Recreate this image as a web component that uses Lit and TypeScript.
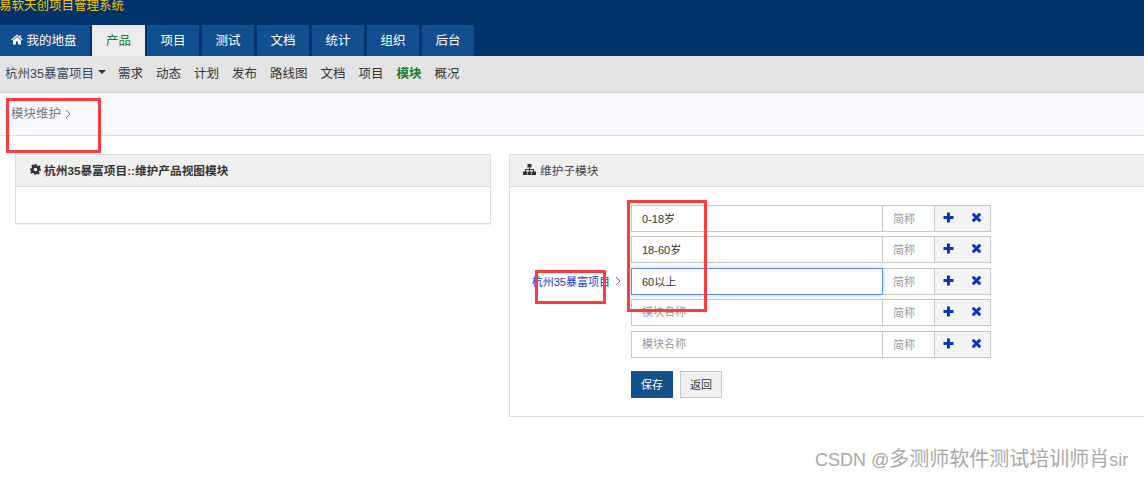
import { LitElement, html, css, svg } from "lit";
import { customElement } from "lit/decorators.js";

const FONT = css`"Liberation Sans", "Noto Sans CJK SC", sans-serif`;

const plusIcon = svg`<svg class="ico" width="11" height="11" viewBox="0 0 11 11"><path d="M4 0.5h3v3.5h3.5v3H7v3.5H4V7H0.5V4H4z" fill="#0a34c4"/></svg>`;
const timesIcon = svg`<svg class="ico" width="9" height="9" viewBox="0 0 9 9"><path d="M1.7 1.7L7.3 7.3M7.3 1.7L1.7 7.3" stroke="#0a34c4" stroke-width="3" stroke-linecap="square" fill="none"/></svg>`;
const chevron = svg`<svg width="6" height="10" viewBox="0 0 6 10"><path d="M1 1l4 4-4 4" stroke="#777" stroke-width="1" fill="none"/></svg>`;
const homeIcon = svg`<svg width="12" height="11" viewBox="0 0 12 11"><path d="M6 0.6L0.3 5.6l.7.8L6 2l5 4.4.7-.8-2-1.8V1.2H8.4v1.5zM2 6.6V10.6h3V7.6h2v3h3V6.6L6 3.1z" fill="#fff"/></svg>`;
const cogIcon = svg`<svg width="11" height="11" viewBox="0 0 11 11"><path fill-rule="evenodd" d="M4.5 0h2l.3 1.6 1.1.5L9.3 1.2l1.4 1.4-.9 1.4.5 1.1L11 4.5v2l-1.6.3-.5 1.1.9 1.4-1.4 1.4-1.4-.9-1.1.5L5.5 11h-1l-.3-1.6-1.1-.5-1.4.9L.3 8.4l.9-1.4-.5-1.1L0 6.5v-2l1.6-.3.5-1.1-.9-1.4L2.6.3 4 1.2l.5-.2zM5.5 3.7a1.8 1.8 0 100 3.6 1.8 1.8 0 000-3.6z" fill="#333"/></svg>`;
const sitemapIcon = svg`<svg width="13" height="11" viewBox="0 0 13 11"><g fill="#333"><rect x="4.5" y="0" width="4" height="3.5"/><rect x="6" y="3.5" width="1" height="4"/><rect x="2" y="5" width="9" height="1"/><rect x="2" y="5" width="1" height="3"/><rect x="10" y="5" width="1" height="3"/><rect x="0" y="7.5" width="4" height="3.5"/><rect x="4.5" y="7.5" width="4" height="3.5"/><rect x="9" y="7.5" width="4" height="3.5"/></g></svg>`;

@customElement("app-root")
export class AppRoot extends LitElement {
  static styles = css`
    :host {
      display: block;
      position: relative;
      width: 1144px;
      height: 478px;
      overflow: hidden;
      background: #fff;
      font-family: ${FONT};
      font-size: 12.5px;
      color: #333;
    }
    .header { background: #00336a; height: 56px; display: flex; flex-direction: column; }
    .title { height: 25px; color: #f5c400; font-size: 12.5px; line-height: 13px; white-space: nowrap; box-sizing: border-box; margin-left: -1px; }
    .tabs { display: flex; gap: 3px; height: 31px; }
    .tab { width: 52px; background: #114f8e; color: #fff; display: flex; align-items: center; justify-content: center; box-sizing: border-box; padding-bottom: 3px; }
    .tab.home { width: 90px; gap: 3px; padding-right: 2px; }
    .tab.active { background: #ececec; color: #1b7a2c; width: 53px; margin: 0 -1px; }
    .subnav { height: 37px; box-sizing: border-box; background: #e4e4e4; border-bottom: 1px solid #d0d0d0; display: flex; align-items: center; padding: 0 0 4px 5px; color: #333; }
    .product { display: flex; align-items: center; margin-right: 12px; color: #3a4a5a; }
    .caret { width: 0; height: 0; border-left: 4px solid transparent; border-right: 4px solid transparent; border-top: 4px solid #333; margin-left: 4px; }
    .nav-links { display: flex; gap: 13px; }
    .nav-links .on { color: #1b7a2c; font-weight: bold; }
    .crumb { height: 43px; box-sizing: border-box; background: #f8f9ff; border-bottom: 1px solid #dedede; padding: 13px 0 0 11px; color: #777; display: flex; align-items: flex-start; gap: 4px; line-height: 16px; }
    .crumb svg { margin-top: 3px; }
    .main { display: flex; gap: 18px; padding: 18px 0 0 15px; align-items: flex-start; }
    .panel { border: 1px solid #dcdcdc; box-sizing: border-box; background: #fff; flex: none; }
    .left { width: 476px; height: 70px; box-shadow: 0 1px 1px rgba(0,0,0,.05); }
    .right { width: 650px; height: 263px; }
    .phead { height: 32px; box-sizing: border-box; background: #f0f0f0; border-bottom: 1px solid #dcdcdc; display: flex; align-items: center; padding: 0 0 3px 13px; gap: 4px; font-size: 11.7px; color: #333; }
    .left .phead { font-weight: bold; padding-left: 14px; gap: 3px; }
    .right .phead { color: #444; }
    .pbody { display: flex; padding: 17.9px 0 0 0; }
    .root { width: 121px; flex: none; display: flex; align-items: center; justify-content: flex-end; height: 153px; gap: 5px; padding-right: 10px; box-sizing: border-box; color: #1a3cc8; font-size: 11px; white-space: nowrap; }
    .rows { display: grid; row-gap: 4.5px; width: 360px; }
    .row { display: flex; height: 27px; box-sizing: border-box; }
    .row input { width: 252px; height: 27px; box-sizing: border-box; border: 1px solid #c8c8c8; padding: 0 10px 1px; font: 11px ${FONT}; color: #333; outline: none; background: #fff; }
    .row input::placeholder { color: #999; }
    .row input.focus { border-color: #4d90fe; box-shadow: 0 0 6px rgba(77,144,254,.35); position: relative; z-index: 1; }
    .abbr { width: 52px; height: 27px; box-sizing: border-box; border: 1px solid #c8c8c8; border-left: 0; color: #999; font-size: 11px; display: flex; align-items: center; padding: 0 0 1px 10px; }
    .acts { width: 56px; box-sizing: border-box; background: #f4f4f4; border: 1px solid #c8c8c8; border-left: 0; display: flex; align-items: center; padding-left: 8px; gap: 18px; padding-bottom: 2px; }
    .ico { display: block; flex: none; }
    .btns { display: flex; gap: 7px; margin-top: 8.5px; }
    .btn { width: 42px; height: 27px; box-sizing: border-box; font-size: 11px; display: flex; align-items: center; justify-content: center; }
    .save { background: #14508a; color: #fff; }
    .back { background: #f0f0f0; border: 1px solid #c8c8c8; color: #333; }
    .mark { position: absolute; border: 3px solid #ff3b3b; box-sizing: border-box; pointer-events: none; z-index: 3; }
    .m1 { left: 6px; top: 98px; width: 95px; height: 55px; }
    .m2 { left: 535px; top: 270px; width: 71px; height: 34px; }
    .m3 { left: 627px; top: 200px; width: 80px; height: 112px; }
    .wm { position: absolute; left: 815px; top: 448px; font-size: 18px; line-height: 22px; color: #a8a8a8; white-space: nowrap; z-index: 3; }
    .wm .cjk { font-size: 20px; }
  `;

  render() {
    const tabs = ["项目", "测试", "文档", "统计", "组织", "后台"];
    const links = ["需求", "动态", "计划", "发布", "路线图", "文档", "项目"];
    const rows = [
      { v: "0-18岁" },
      { v: "18-60岁" },
      { v: "60以上", focus: true },
      { v: "" },
      { v: "" },
    ];
    return html`
      <div class="header">
        <div class="title">易软天创项目管理系统</div>
        <div class="tabs">
          <div class="tab home">${homeIcon}<span>我的地盘</span></div>
          <div class="tab active">产品</div>
          ${tabs.map((t) => html`<div class="tab">${t}</div>`)}
        </div>
      </div>
      <div class="subnav">
        <div class="product">杭州35暴富项目<span class="caret"></span></div>
        <div class="nav-links">
          ${links.map((l) => html`<span>${l}</span>`)}
          <span class="on">模块</span>
          <span>概况</span>
        </div>
      </div>
      <div class="crumb"><span>模块维护</span>${chevron}</div>
      <div class="main">
        <section class="panel left">
          <div class="phead">${cogIcon}<span>杭州35暴富项目::维护产品视图模块</span></div>
        </section>
        <section class="panel right">
          <div class="phead">${sitemapIcon}<span>维护子模块</span></div>
          <div class="pbody">
            <div class="root"><span>杭州35暴富项目</span>${chevron}</div>
            <div class="rows">
              ${rows.map(
                (r) => html`<div class="row">
                  <input class=${r.focus ? "focus" : ""} .value=${r.v} placeholder="模块名称" />
                  <div class="abbr">简称</div>
                  <div class="acts">${plusIcon}${timesIcon}</div>
                </div>`
              )}
              <div class="btns">
                <div class="btn save">保存</div>
                <div class="btn back">返回</div>
              </div>
            </div>
          </div>
        </section>
      </div>
      <div class="mark m1"></div>
      <div class="mark m2"></div>
      <div class="mark m3"></div>
      <div class="wm">CSDN @<span class="cjk">多测师软件测试培训师肖</span>sir</div>
    `;
  }
}
